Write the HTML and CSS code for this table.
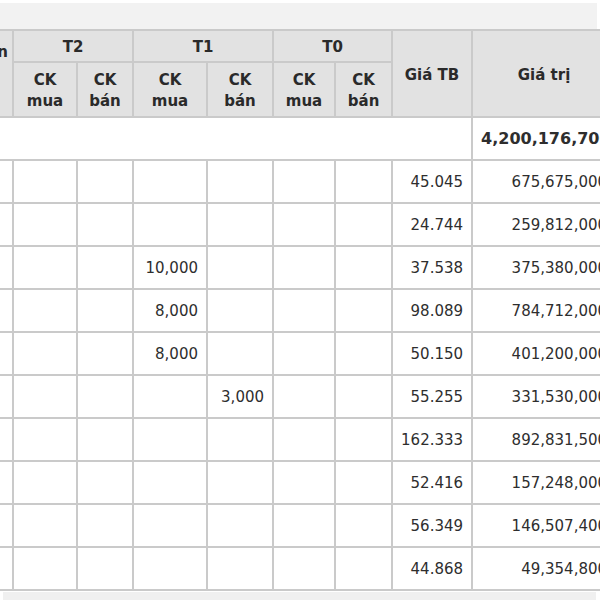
FILE: index.html
```html
<!DOCTYPE html>
<html lang="vi">
<head>
<meta charset="utf-8">
<link rel="stylesheet" href="styles.css">
</head>
<body>
<div class="topbar"></div>
<table class="grid">
  <colgroup>
    <col class="c-first"><col class="c-mua"><col class="c-ban"><col class="c-mua1"><col class="c-ban1"><col class="c-mua0"><col class="c-ban0"><col class="c-tb"><col class="c-gt">
  </colgroup>
  <thead>
    <tr class="h1">
      <th rowspan="2" class="first"><span class="l1">Số lượng còn</span><span class="l2">lại</span><span class="l2">cuối kỳ</span></th>
      <th colspan="2">T2</th>
      <th colspan="2">T1</th>
      <th colspan="2">T0</th>
      <th rowspan="2">Giá TB</th>
      <th rowspan="2">Giá trị</th>
    </tr>
    <tr class="h2">
      <th>CK<br>mua</th><th>CK<br>bán</th>
      <th>CK<br>mua</th><th>CK<br>bán</th>
      <th>CK<br>mua</th><th>CK<br>bán</th>
    </tr>
  </thead>
  <tbody>
    <tr class="total"><td colspan="8"></td><td class="num">4,200,176,700</td></tr>
    <tr><td></td><td></td><td></td><td></td><td></td><td></td><td></td><td class="num">45.045</td><td class="num">675,675,000</td></tr>
    <tr><td></td><td></td><td></td><td></td><td></td><td></td><td></td><td class="num">24.744</td><td class="num">259,812,000</td></tr>
    <tr><td></td><td></td><td></td><td class="num">10,000</td><td></td><td></td><td></td><td class="num">37.538</td><td class="num">375,380,000</td></tr>
    <tr><td></td><td></td><td></td><td class="num">8,000</td><td></td><td></td><td></td><td class="num">98.089</td><td class="num">784,712,000</td></tr>
    <tr><td></td><td></td><td></td><td class="num">8,000</td><td></td><td></td><td></td><td class="num">50.150</td><td class="num">401,200,000</td></tr>
    <tr><td></td><td></td><td></td><td></td><td class="num">3,000</td><td></td><td></td><td class="num">55.255</td><td class="num">331,530,000</td></tr>
    <tr><td></td><td></td><td></td><td></td><td></td><td></td><td></td><td class="num">162.333</td><td class="num">892,831,500</td></tr>
    <tr><td></td><td></td><td></td><td></td><td></td><td></td><td></td><td class="num">52.416</td><td class="num">157,248,000</td></tr>
    <tr><td></td><td></td><td></td><td></td><td></td><td></td><td></td><td class="num">56.349</td><td class="num">146,507,400</td></tr>
    <tr><td></td><td></td><td></td><td></td><td></td><td></td><td></td><td class="num">44.868</td><td class="num">49,354,800</td></tr>
  </tbody>
</table>
<div class="bottombar"></div>
</body>
</html>
```
FILE: styles.css
```css
html, body {
  margin: 0;
  padding: 0;
  background: #ffffff;
  overflow: hidden;
  width: 600px;
  height: 600px;
}
body {
  font-family: "DejaVu Sans", Verdana, sans-serif;
  font-size: 15px;
  color: #2e2e2e;
}
.topbar {
  margin-top: 3px;
  height: 26px;
  background: #f2f2f2;
  width: 597px;
}
.grid {
  border-collapse: collapse;
  table-layout: fixed;
  width: 733px;
  margin-left: -118px;
}
.c-first { width: 130px; }
.c-mua { width: 64px; }
.c-ban { width: 56px; }
.c-mua1 { width: 74px; }
.c-ban1 { width: 66px; }
.c-mua0 { width: 62px; }
.c-ban0 { width: 57px; }
.c-tb { width: 80px; }
.c-gt { width: 144px; }
.grid th, .grid td {
  border: 2px solid #cacaca;
  padding: 0 8px;
}
.grid th {
  background: #e2e2e2;
  font-weight: bold;
  text-align: center;
  vertical-align: middle;
  line-height: 21px;
  color: #2a2a2a;
  white-space: nowrap;
}
.h1 th {
  padding-top: 3px;
}
.h2 th {
  padding-top: 3px;
}
.grid th.first {
  padding: 0 4px 0 0;
}
.l1 {
  display: block;
  text-align: right;
}
.l2 {
  display: block;
  text-align: left;
}
.h1 { height: 32px; }
.h2 { height: 55px; }
.total { height: 42px; }
.total .num {
  font-weight: bold;
  font-size: 16px;
}
.grid tbody tr { height: 43px; }
.grid td.num {
  text-align: right;
  white-space: nowrap;
}
.bottombar {
  margin-top: 1px;
  margin-left: 3px;
  height: 12px;
  width: 593px;
  background: #f0f0f0;
}
```
